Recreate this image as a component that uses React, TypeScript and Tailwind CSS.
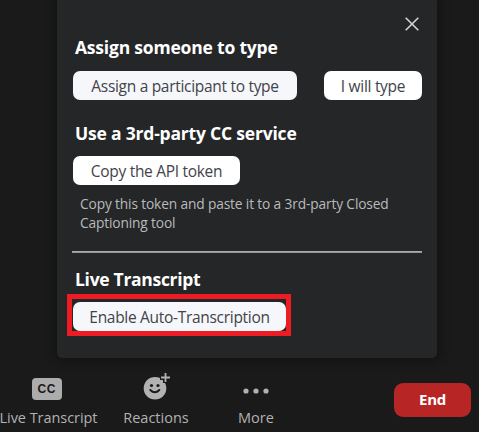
import type { ReactNode } from "react";

function Heading({ children, className }: { children: ReactNode; className: string }) {
  return (
    <h2 className={`ml-[2px] h-6 whitespace-nowrap text-[17.5px] leading-6 font-bold text-white ${className}`}>
      {children}
    </h2>
  );
}

function PanelButton({ children, className }: { children: ReactNode; className: string }) {
  return (
    <button className={`flex h-[29px] items-center justify-center rounded-[7px] whitespace-nowrap text-[15.5px] leading-5 tracking-[-0.3px] text-[#424349] ${className}`}>
      {children}
    </button>
  );
}

function ToolItem({ icon, children, className }: { icon: ReactNode; children: ReactNode; className: string }) {
  return (
    <div className={`flex shrink-0 flex-col items-center ${className}`}>
      <div className="flex h-8 items-end justify-center">{icon}</div>
      <span className="mt-2 whitespace-nowrap text-[14.5px] leading-5">{children}</span>
    </div>
  );
}

export default function App() {
  return (
    <div className="flex h-[432px] w-[479px] flex-col overflow-hidden bg-[#1a1a1a] font-['Open_Sans','Noto_Sans',sans-serif]">
      <section className="ml-[57px] flex h-[358px] w-[380px] shrink-0 flex-col rounded-b-[5px] bg-[#252628] pr-[15px] pl-4 shadow-[0_0_9px_3px_#131313]">
        <div className="flex h-[35px] shrink-0 justify-end pt-[17px] pr-[3px]">
          <svg width="14" height="14" viewBox="0 0 14 14" fill="none" stroke="#d4d4d5" strokeWidth="1.6">
            <path d="M.7.7l12.6 12.6M13.3.7L.7 13.3" />
          </svg>
        </div>
        <Heading className="tracking-[-0.2px]">Assign someone to type</Heading>
        <div className="mt-[12px] flex w-[349px] justify-between">
          <PanelButton className="w-[224px] bg-[#f6f7fa]">Assign a participant to type</PanelButton>
          <PanelButton className="w-[98px] bg-white">I will type</PanelButton>
        </div>
        <Heading className="mt-[21px] tracking-[-0.2px]">Use a 3rd-party CC service</Heading>
        <PanelButton className="mt-[11px] w-[167px] bg-white">Copy the API token</PanelButton>
        <p className="mt-[9px] ml-[7px] text-[13.75px] leading-[19px] tracking-[-0.15px] whitespace-nowrap text-[#b9babb]">
          Copy this token and paste it to a 3rd-party Closed<br />Captioning tool
        </p>
        <hr className="mt-[19px] -ml-px h-[2px] w-[350px] shrink-0 border-0 border-t border-t-[#ababac] bg-[#949496]" />
        <Heading className="mt-[14px] tracking-[-0.3px]">Live Transcript</Heading>
        <div className="mt-[3px] -ml-[6px] flex h-[42px] w-[224px] shrink-0 border-[5px] border-[#ed1c24] bg-[#252628] pt-[3px] pl-px">
          <PanelButton className="w-[213px] bg-[#f6f7fa]">Enable Auto-Transcription</PanelButton>
        </div>
      </section>
      <footer className="flex h-[74px] shrink-0 items-start text-[#b2b2b2]">
        <ToolItem className="mt-[10px] w-[97px] tracking-[-0.05px]" icon={
          <span className="-mr-[-0.5px] ml-[-3px] flex h-[22px] w-[30px] items-center justify-center rounded-[4px] bg-[#acacac] font-['Liberation_Sans',sans-serif] text-[12px] font-bold tracking-[0.5px] text-[#1a1a1a]">CC</span>
        }>Live Transcript</ToolItem>
        <ToolItem className="ml-[24px] mt-[10px] w-[70px]" icon={
          <svg width="28" height="28" viewBox="0 0 28 28" fill="none">
            <circle cx="13" cy="16.2" r="11.3" fill="#b2b2b2" />
            <path d="M23.500 0v11M18 5.500h10" stroke="#1a1a1a" strokeWidth="5" />
            <path d="M23.500 1v9M19 5.500h9" stroke="#b2b2b2" strokeWidth="1.8" />
            <circle cx="9.500" cy="13.500" r="1.600" fill="#1a1a1a" />
            <circle cx="16" cy="13.500" r="1.600" fill="#1a1a1a" />
            <path d="M8.300 18Q12.800 22.500 17.300 18" stroke="#1a1a1a" strokeWidth="2" strokeLinecap="round" />
          </svg>
        }>Reactions</ToolItem>
        <ToolItem className="ml-[35px] mt-[10px] w-[60px]" icon={
          <svg width="26" height="22" viewBox="0 0 26 22" fill="#b2b2b2">
            <circle cx="3" cy="13" r="2.600" /><circle cx="13" cy="13" r="2.600" /><circle cx="23" cy="13" r="2.600" />
          </svg>
        }>More</ToolItem>
        <button className="mt-[25px] ml-[108px] flex h-[34px] w-[77px] shrink-0 items-center justify-center rounded-[9px] bg-[#b72525] pb-px text-[15px] font-bold tracking-[-0.3px] text-white">End</button>
      </footer>
    </div>
  );
}
